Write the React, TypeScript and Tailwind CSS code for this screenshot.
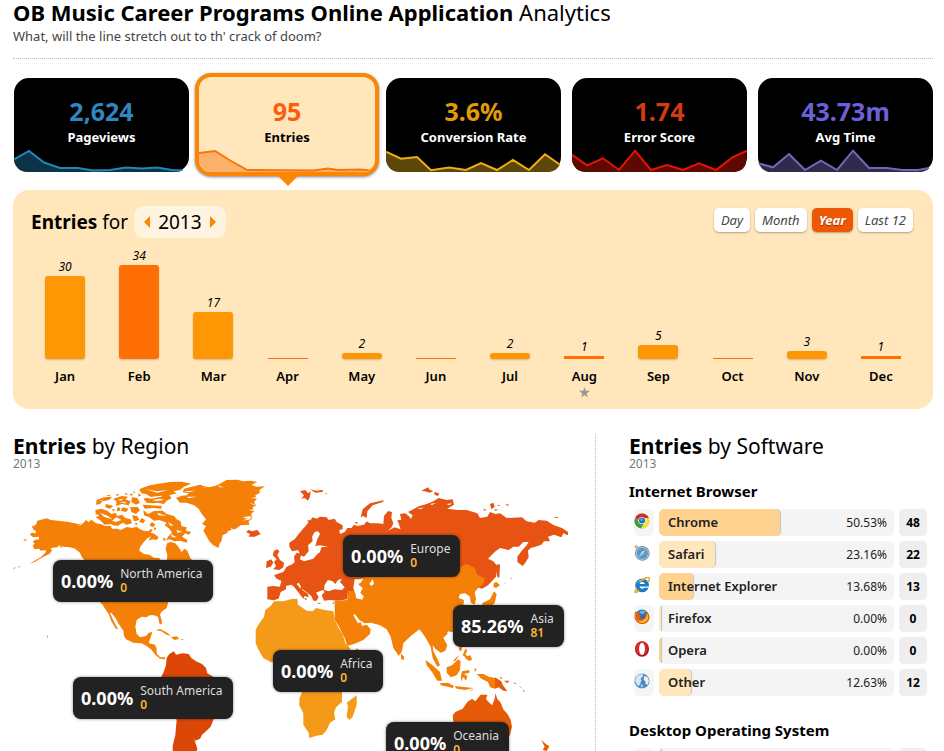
import React from "react";

type Stat = {
  value: string;
  label: string;
  color: string;
  line: string;
  fill: string;
  points: string;
  active?: boolean;
};

const stats: Stat[] = [
  { value: "2,624", label: "Pageviews", color: "text-[#2f86c1]", line: "#1f87bb", fill: "#0b3345", points: "0,11.5 15,3 30,14.5 46,20 64,20 79,22.5 96,22 112,19.5 128,20.5 143,19.5 158,22 169,22.5" },
  { value: "95", label: "Entries", color: "text-[#fb5d0a]", line: "#fb7407", fill: "#fdb06c", points: "0,5 16,3 31,12.5 48,22 114,22.5 128,20.5 138,22 160,21.5 171,22.5", active: true },
  { value: "3.6%", label: "Conversion Rate", color: "text-[#e39b0a]", line: "#eeae12", fill: "#5d4609", points: "0,3.7 15,10.7 31,9 45,22.3 63,19.5 80,22 95,15 111,22 127,12 143,22 159,6.3 175,17.5" },
  { value: "1.74", label: "Error Score", color: "text-[#d63a14]", line: "#e81305", fill: "#5c0803", points: "0,6.7 15,17.3 31,10.3 47,22 63,2.7 79,22 95,17 111,22 127,15.3 144,22 160,9.7 175,2.7" },
  { value: "43.73m", label: "Avg Time", color: "text-[#6c60dc]", line: "#6f69b8", fill: "#2e2b4b", points: "0,15.3 15,19.3 31,6 47,22 63,12.7 79,22 95,2.7 111,20 129,20 144,22 160,22 171,20" },
];

const months = [
  { name: "Jan", value: 30, height: 83 },
  { name: "Feb", value: 34, height: 94 },
  { name: "Mar", value: 17, height: 47 },
  { name: "Apr", value: 0, height: 1 },
  { name: "May", value: 2, height: 6 },
  { name: "Jun", value: 0, height: 1 },
  { name: "Jul", value: 2, height: 6 },
  { name: "Aug", value: 1, height: 3, current: true },
  { name: "Sep", value: 5, height: 14 },
  { name: "Oct", value: 0, height: 1 },
  { name: "Nov", value: 3, height: 8 },
  { name: "Dec", value: 1, height: 3 },
];

const regions = [
  { name: "North America", pct: "0.00%", count: 0, x: 40, y: 82 },
  { name: "South America", pct: "0.00%", count: 0, x: 60, y: 199 },
  { name: "Europe", pct: "0.00%", count: 0, x: 330, y: 57 },
  { name: "Africa", pct: "0.00%", count: 0, x: 260, y: 172 },
  { name: "Asia", pct: "85.26%", count: 81, x: 440, y: 127 },
  { name: "Oceania", pct: "0.00%", count: 0, x: 373, y: 244 },
];

function StatCard({ stat }: { stat: Stat }) {
  const shell = stat.active
    ? "relative -mt-[5px] -mr-1 -mb-1 -ml-[5px] h-[103px] rounded-[16px] border-4 border-[#fb8504] bg-[#ffe6bb] text-black shadow-[0_1px_3px_rgba(0,0,0,0.5)]"
    : "relative h-[94px] rounded-[15px] bg-black text-white";
  return (
    <button type="button" className={shell}>
      <span className={"flex h-full flex-col items-center overflow-hidden rounded-[13px] " + (stat.active ? "pt-[22px]" : "pt-[21px]")}>
        <span className={"text-[25px] leading-[24px] font-bold " + stat.color}>{stat.value}</span>
        <span className="mt-[5px] text-[13px] leading-[18px] font-bold">{stat.label}</span>
        <svg className="mt-auto h-6 w-full" viewBox="0 0 175 24" preserveAspectRatio="none" aria-hidden="true">
          <polygon points={"0,24 " + stat.points + " 173,24"} fill={stat.fill} />
          <polyline points={stat.points} fill="none" stroke={stat.line} strokeWidth="2" />
        </svg>
      </span>
      {stat.active && (
        <svg className="absolute top-[98px] left-[78px] h-[11px] w-[22px]" viewBox="0 0 22 11" aria-hidden="true">
          <path d="M0 0H22L11 11Z" fill="#fb8504" />
        </svg>
      )}
    </button>
  );
}

function WorldMap() {
  return (
    <svg className="block w-full" viewBox="39 144 1746 819" role="img" aria-label="World map">
      <g fill="#f58008">
        <path d="M95 290L108 284 112 272 140 265 152 270 175 272 205 276 237 283 250 278 258 270 266 276 274 269 288 280 305 283 315 288 332 287 336 296 352 296 362 300 380 291 398 294 408 288 418 296 430 302 446 304 452 296 458 300 452 308 466 312 455 318 440 326 430 338 420 352 418 362 432 372 448 374 462 383 478 384 486 396 500 395 502 375 497 358 501 340 512 336 526 340 536 352 545 366 553 356 562 362 572 386 600 402 612 430 585 450 560 468 545 480 520 500 505 517 500 534 484 546 480 554 486 575 484 584 478 580 474 560 462 556 448 556 440 562 425 560 410 570 406 590 410 612 420 622 438 618 446 608 457 606 452 622 446 640 465 644 470 656 470 670 480 682 496 682 494 688 480 686 466 674 455 660 440 648 425 640 400 638 378 628 372 618 370 602 356 582 348 566 334 548 330 550 342 575 354 598 348 597 334 574 326 552 316 538 308 524 298 515 270 480 252 440 255 392 245 380 240 368 225 356 210 352 190 350 178 346 172 352 152 354 156 362 148 372 128 382 104 396 88 402 104 392 122 382 136 368 138 360 122 362 118 356 104 358 98 348 104 340 98 336 104 330 118 328 116 320 100 322 90 314 94 308 106 310 108 304 100 298Z" />
        <path d="M528 204L545 197 560 196 566 190 548 187 552 176 575 170 600 164 625 172 645 168 662 160 680 150 712 149 730 154 752 152 772 156 755 164 768 170 795 169 778 180 780 188 766 196 770 208 762 216 768 226 758 232 762 245 754 250 756 266 746 274 748 284 722 286 708 296 686 302 680 310 668 316 664 334 658 342 656 354 640 346 628 334 618 316 610 302 618 288 606 282 618 268 604 250 596 236 582 226 560 218 540 218Z" />
        <path d="M418 178L432 172 450 166 485 160 510 156 545 155 574 161 552 170 540 180 520 184 530 190 508 196 515 205 500 212 492 222 472 218 458 220 440 218 430 206 452 200 438 192 424 190ZM430 240L444 252 462 243 488 242 500 252 522 258 530 268 542 274 544 288 560 292 558 302 574 306 566 314 556 310 546 320 562 330 560 338 540 332 522 334 510 328 498 330 506 318 516 308 508 296 494 286 500 278 478 270 462 272 448 262 432 256ZM286 240L304 236 322 242 334 252 346 248 352 258 366 254 376 264 392 268 396 280 380 284 368 278 350 290 332 282 314 284 302 272 288 262ZM290 210L312 202 336 200 328 210 308 214 300 222 288 224ZM340 206L366 198 384 200 376 208 392 214 386 226 366 222 348 228 350 216ZM318 222L340 228 330 236 316 232ZM368 232L386 236 378 246 362 242ZM396 202L412 204 420 218 408 224 394 216ZM390 232L412 230 420 240 408 252 394 246ZM396 256L412 258 418 270 402 274ZM424 264L436 270 430 280 418 276ZM428 224L452 226 485 228 484 236 460 234 434 236ZM456 276L466 284 458 292 448 286ZM454 316L464 312 476 322 470 330 458 328 446 332ZM376 188L384 192 376 196ZM400 184L406 187 400 190ZM178 350L186 346 184 354ZM70 327L82 330 74 333ZM40 414L50 412 42 417ZM54 410L62 408 56 413ZM140 614L145 620 142 624ZM467 601L480 597 498 606 514 618 500 614 484 604ZM512 622L530 619 538 626 524 630ZM543 627L552 628 545 631ZM488 322L498 328 492 334ZM462 290L470 296 462 300ZM346 194L358 191 352 198ZM318 196L334 194 326 199ZM414 190L424 196 416 200ZM390 190L400 194 392 198ZM352 232L362 234 358 244 350 242ZM334 238L346 238 340 244ZM404 278L414 280 408 286Z" />
      </g>
      <path
        fill="#fff"
        d="M420 198L450 201 486 197 484 200 452 206ZM436 177L470 184 506 180 472 188ZM456 210L480 206 492 210 470 213ZM300 248L324 258 336 268 312 260ZM336 272L350 262 364 270 348 276ZM286 252L298 256 290 262ZM472 248L500 258 476 256ZM504 276L520 286 512 288ZM530 300L548 306 532 308ZM512 312L530 322 516 322ZM296 214L312 208 306 212ZM352 210L370 206 364 212ZM358 218L374 215 380 220ZM560 200L592 200 566 204ZM552 184L586 182 566 187ZM606 166L622 178 612 172ZM652 166L672 172 660 172ZM768 202L752 204 770 206ZM764 222L748 220 764 225ZM764 238L746 240 760 243ZM752 258L728 262 742 266 726 272 752 268ZM700 298L690 292 696 300ZM612 262L602 270 612 272ZM602 292L614 296 606 300ZM232 288L246 280 256 274 244 284ZM186 356L200 352 216 362 230 370 244 386 226 374 210 364ZM334 290L350 286 356 294 342 294ZM392 286L404 284 412 292 398 292Z"
      />
      <path fill="#dc4606" d="M500 684L508 672 522 664 528 674 548 670 566 672 574 684 588 694 606 702 618 714 622 730 640 740 675 760 680 790 665 830 640 870 632 890 618 904 606 914 600 926 586 932 582 924 588 944 592 955 588 975 518 975 518 948 526 915 530 870 500 820 478 780 484 740 490 728 498 706Z" />
      <g fill="#e65312">
        <path d="M802 470L820 468 840 470 844 452 830 446 822 436 838 430 850 426 860 410 878 402 884 396 882 380 890 368 904 372 900 388 912 394 940 386 950 374 960 366 964 352 984 350 960 346 946 348 952 328 960 312 954 304 944 306 936 320 938 334 924 346 926 364 912 380 902 376 894 360 876 364 868 350 868 338 884 328 896 312 908 298 920 284 926 276 920 272 932 270 938 262 950 266 960 260 980 262 986 270 1004 266 1010 276 1028 286 1028 298 1018 300 1020 312 1034 306 1042 294 1054 294 1062 284 1072 288 1092 284 1100 274 1110 280 1134 280 1150 282 1152 258 1164 243 1176 246 1174 264 1180 280 1176 290 1164 302 1184 292 1202 298 1192 270 1204 270 1200 252 1216 250 1230 262 1232 268 1238 256 1224 246 1240 238 1258 228 1280 222 1300 214 1316 204 1340 210 1358 208 1362 224 1342 236 1372 240 1400 240 1432 250 1440 264 1462 260 1470 246 1486 252 1500 250 1520 264 1566 262 1580 274 1604 278 1616 270 1640 272 1662 286 1686 294 1704 306 1704 316 1690 310 1684 322 1662 314 1644 320 1650 334 1632 334 1624 344 1606 350 1592 354 1584 362 1586 382 1576 398 1568 408 1552 396 1552 380 1564 364 1580 346 1586 336 1570 336 1556 350 1540 350 1526 360 1500 354 1484 366 1464 386 1480 394 1492 408 1488 440 1464 466 1446 476 1400 460 1370 450 1100 450 1080 450 1062 466 1066 482 1044 484 1042 508 1012 512 990 510 972 512 965 496 974 486 968 480 948 488 956 500 950 512 940 512 934 498 922 488 908 478 896 458 890 462 902 476 924 492 926 502 914 498 910 506 896 488 882 470 874 464 858 468 858 478 842 486 836 506 820 511 802 508Z" />
        <path d="M822 362L832 358 838 364 832 376 840 390 852 398 850 412 838 420 820 418 828 408 822 396 830 388 818 376ZM800 394L814 388 820 398 812 410 798 414ZM738 306L746 300 756 304 772 300 782 312 764 320 746 320 750 312ZM900 184L916 180 924 190 932 184 930 200 924 212 914 204 904 206 912 196ZM930 178L950 182 968 179 968 186 946 188ZM976 190L982 191 978 194ZM1082 262L1088 238 1110 220 1150 211 1150 215 1118 226 1102 244 1100 264 1090 258ZM1264 182L1284 172 1290 180 1300 182 1290 188 1274 184ZM1302 186L1318 190 1314 198 1304 194ZM1470 222L1480 218 1484 230 1474 238ZM1490 226L1500 224 1498 228ZM1516 224L1526 222 1524 228ZM1482 238L1496 239 1486 242ZM1660 262L1674 260 1672 265ZM1492 402L1500 404 1498 444 1492 440 1488 420ZM902 470L908 472 906 486 902 480ZM952 518L964 519 956 522ZM910 504L922 506 918 510ZM996 519L1004 517 1000 522ZM1450 236L1460 240 1452 242ZM1064 276L1074 276 1070 282ZM886 406L892 402 892 408Z" />
      </g>
      <path fill="#fff" d="M972 480L974 464 984 450 998 454 1006 462 1014 450 1026 446 1020 456 1034 472 1026 480 1004 478 986 484ZM1252 236L1272 232 1262 238ZM1290 222L1308 218 1296 225ZM1340 222L1356 220 1348 226Z" />
      <g fill="#f58008">
        <path d="M1004 512L1042 510 1044 484 1060 482 1070 484 1072 500 1086 510 1090 502 1080 486 1088 474 1076 464 1072 452 1086 444 1104 440 1370 440 1380 410 1400 402 1424 414 1432 434 1454 444 1450 462 1436 472 1424 486 1428 506 1424 524 1412 518 1410 500 1396 490 1380 492 1376 504 1392 510 1390 530 1400 560 1378 604 1352 606 1344 604 1330 624 1342 646 1336 662 1322 668 1306 656 1298 646 1300 664 1312 686 1320 706 1312 710 1298 684 1292 650 1276 622 1262 602 1258 598 1230 620 1210 640 1206 664 1196 678 1180 654 1172 620 1160 598 1140 586 1112 578 1094 580 1078 570 1064 552 1060 556 1074 580 1082 576 1086 588 1100 584 1112 598 1110 612 1090 630 1062 642 1042 648 1034 624 1020 596 1004 568 1004 540Z" />
        <path d="M1202 670L1212 680 1212 690 1204 688ZM1276 690L1296 704 1320 726 1326 752 1312 752 1296 726 1280 706ZM1320 760L1344 758 1362 768 1358 774 1334 768 1322 766ZM1364 768L1392 771 1420 774 1396 780 1370 776ZM1406 784L1420 776 1418 780ZM1340 712L1356 706 1374 688 1382 694 1380 720 1370 736 1352 742 1340 728ZM1386 724L1408 720 1408 728 1392 732 1402 738 1398 752 1388 740 1386 756 1382 742ZM1390 622L1402 620 1396 632 1388 630ZM1326 604L1336 602 1344 610 1334 620 1326 616ZM1378 652L1386 650 1384 664 1376 660ZM1396 656L1402 660 1396 674 1402 678 1412 676 1416 690 1406 692 1392 682 1400 684 1388 676ZM1358 694L1374 678 1378 676 1366 692ZM1424 714L1430 718 1424 726ZM1430 732L1450 732 1466 740 1485 744 1485 776 1470 772 1464 756 1444 746ZM1446 520L1470 508 1482 484 1490 492 1484 520 1470 530 1450 530ZM1482 458L1490 456 1500 466 1488 474 1480 470ZM1512 462L1520 454 1516 460ZM1530 448L1538 440 1534 448ZM1066 656L1078 658 1070 662Z" />
      </g>
      <path fill="#fff" d="M1064 448L1080 448 1090 446 1082 458 1070 464 1076 476 1088 476 1080 488 1092 500 1080 508 1068 504 1066 490 1060 474ZM1108 462L1118 448 1122 462 1114 468Z" />
      <path fill="#f49a18" d="M767 600L774 586 792 560 796 540 812 528 822 514 850 514 872 508 892 506 894 524 920 542 938 544 948 534 974 540 1000 544 1004 566 1014 592 1028 612 1036 640 1050 654 1060 680 1050 720 1030 760 1026 790 1026 816 1008 832 1002 848 1006 868 990 878 980 900 968 914 946 918 928 924 926 908 910 884 910 850 898 826 898 806 906 786 880 760 880 720 840 700 812 696 790 684 776 660 767 640ZM1070 796L1070 824 1058 860 1048 870 1040 860 1044 828 1040 818Z" />
      <path fill="#e55b08" d="M1485 742L1504 754 1508 764 1522 784 1510 782 1496 772 1485 776ZM1500 740L1508 744 1502 746ZM1512 752L1528 752 1522 760ZM1540 756L1550 762 1544 762ZM1558 768L1566 774 1560 772ZM1568 778L1576 786 1570 784ZM1358 856L1366 846 1388 836 1402 816 1416 806 1426 814 1442 794 1462 794 1458 808 1476 826 1484 808 1486 790 1492 806 1502 818 1510 838 1524 854 1532 870 1536 890 1530 914 1516 945 1490 975 1400 975 1364 920ZM1624 930L1640 944 1648 948 1640 963 1628 960 1634 950Z" />
    </svg>
  );
}

function RegionTag({ region }: { region: (typeof regions)[number] }) {
  return (
    <div
      className="absolute flex h-[42px] items-center gap-[7px] rounded-lg bg-[#222] pr-[10px] pl-2 whitespace-nowrap shadow-[0_0_3px_rgba(0,0,0,0.5)]"
      style={{ left: `${(region.x / 582) * 100}%`, top: `${(region.y / 273) * 100}%` }}
    >
      <strong className="text-[18px] leading-6 font-bold text-white">{region.pct}</strong>
      <span className="flex flex-col text-[12px] leading-[14px]">
        <span className="text-[#ddd]">{region.name}</span>
        <span className="font-semibold text-[#fdb53a]">{region.count}</span>
      </span>
    </div>
  );
}

function ChromeIcon() {
  return (
    <svg className="size-4" viewBox="0 0 16 16" aria-hidden="true">
      <circle cx="8" cy="8" r="7.5" fill="#e9c62b" />
      <path d="M1.4 4.4A7.5 7.5 0 0 1 14.8 5L8 5 6 9Z" fill="#c8302a" />
      <path d="M1.4 4.4A7.5 7.5 0 0 0 7 15.4L10 10 5.5 10Z" fill="#3c9a46" />
      <path d="M14.8 5A7.5 7.5 0 0 1 7 15.4L11 9 10 5Z" fill="#f7dc4a" />
      <circle cx="8" cy="7.6" r="3.7" fill="#f4f4f4" />
      <circle cx="8" cy="7.6" r="3" fill="#1f6cc0" />
      <circle cx="7.6" cy="6.8" r="1.2" fill="#62b4ec" />
    </svg>
  );
}

function SafariIcon() {
  return (
    <svg className="size-4" viewBox="0 0 16 16" aria-hidden="true">
      <circle cx="2.2" cy="1.8" r="1.2" fill="none" stroke="#8e9499" />
      <circle cx="8.3" cy="8.3" r="7.4" fill="#8b9197" />
      <circle cx="8.3" cy="8.3" r="6.4" fill="#c3cace" />
      <circle cx="8.3" cy="8.3" r="5.6" fill="#4d9bd4" />
      <path d="M12 4.5L9.3 9.3 7.3 7.3Z" fill="#e9eef2" />
      <path d="M4.6 12.1L7.3 7.3 9.3 9.3Z" fill="#b9c3ca" />
      <path d="M11.4 5.2L8.6 8.6" stroke="#d66b3b" strokeWidth=".8" />
    </svg>
  );
}

function ExplorerIcon() {
  return (
    <svg className="size-4" viewBox="0 0 16 16" aria-hidden="true">
      <path d="M15 9.600H5.600c.2 1.300 1.200 2.100 2.600 2.100 1 0 1.700-.4 2.100-1h4.200c-.8 2.700-3.200 4.500-6.300 4.500-3.900 0-6.900-2.600-6.900-6.700S4.300 1.800 8.200 1.800c4.200 0 7 3 6.800 7.800zM5.700 7h5C10.500 5.800 9.600 5.100 8.200 5.100S5.900 5.800 5.700 7z" fill="#1d7ac6" />
      <path d="M3 6.300C4.200 3.800 7 2.700 9.500 3.200" stroke="#77c4f0" fill="none" />
      <path d="M3 11C.6 14.500.2 16 1.900 15.400c1-.3 2.200-1.100 3.300-2M5.500 4.800C9.500 1.600 13.500-.4 15 .9c.8.8.2 2.800-.9 4.400" fill="none" stroke="#e9a62c" strokeWidth="1.500" />
    </svg>
  );
}

function FirefoxIcon() {
  return (
    <svg className="size-4" viewBox="0 0 16 16" aria-hidden="true">
      <circle cx="8" cy="7.600" r="7" fill="#2a6cb4" />
      <path d="M5 2.500C7 1 10 1 11.500 2.600L10 5 7 5Z" fill="#56b6de" />
      <path d="M1.300 2.200L3.300 3.600 5.500 3.200 4.800 5.200 7.500 6 6 7.400C5.500 8.600 6.500 10 8.300 9.800 11 9.600 12 7 10.800 4.600L12.300 5.300 12 2.200C16.500 5 16.600 11 12.700 13.700 8.500 16.500 2.700 14.800 1 10.300.2 7.600.6 5 1.300 2.200Z" fill="#df5f12" />
      <path d="M13.300 4.500C15.500 9 13 13 9.500 13.800 6.500 14.300 4.500 13 3.500 11.300 7 13.300 12.500 11 13.300 4.500Z" fill="#f8bd26" />
      <path d="M2 4.500C1.200 7.500 2 10 3.500 11.300" fill="none" stroke="#f08a18" />
    </svg>
  );
}

function OperaIcon() {
  return (
    <svg className="size-4" viewBox="0 0 16 16" aria-hidden="true">
      <ellipse cx="8" cy="8" rx="7" ry="7.800" fill="#a80d12" />
      <ellipse cx="7.600" cy="7.600" rx="6.200" ry="7" fill="#da2a2b" />
      <ellipse cx="8" cy="7.900" rx="2.900" ry="6.100" fill="#fff" />
    </svg>
  );
}

function GlobeIcon() {
  return (
    <svg className="size-4" viewBox="0 0 16 16" aria-hidden="true">
      <circle cx="8" cy="8" r="7.600" fill="#8ba4b8" />
      <circle cx="8" cy="8" r="7" fill="#4688c0" />
      <path d="M2.500 3.500C4.500 1 8 .6 9.300 1.800L8.600 4 6.500 5.300 7.500 7.500 6.500 10 5 13 3 12 1 8Z" fill="#d8e5ee" />
      <path d="M10.500 3L13.500 4 15 8 13.500 12 11.500 11 11.500 8.500 9.600 7 10 4.500Z" fill="#e8f0f5" />
      <path d="M7 11L9.500 12 8.500 14.500 6.500 14Z" fill="#a8c6dc" />
    </svg>
  );
}

type SoftwareRow = { name: string; pct: number; count: number; Icon: () => React.ReactElement; plain?: boolean };

const browsers: SoftwareRow[] = [
  { name: "Chrome", pct: 50.53, count: 48, Icon: ChromeIcon },
  { name: "Safari", pct: 23.16, count: 22, Icon: SafariIcon, plain: true },
  { name: "Internet Explorer", pct: 13.68, count: 13, Icon: ExplorerIcon, plain: true },
  { name: "Firefox", pct: 0, count: 0, Icon: FirefoxIcon },
  { name: "Opera", pct: 0, count: 0, Icon: OperaIcon, plain: true },
  { name: "Other", pct: 12.63, count: 12, Icon: GlobeIcon },
];

const systems: SoftwareRow[] = [{ name: "Windows", pct: 0, count: 0, Icon: GlobeIcon }];

function SoftwareTable({ title, rows }: { title: string; rows: SoftwareRow[] }) {
  return (
    <section className="mb-[19px]">
      <h3 className="mb-[3px] text-[15px] leading-5 font-bold">{title}</h3>
      <table className="w-full border-separate border-spacing-[5px]" aria-label={title}>
        <tbody>
          {rows.map(({ name, pct, count, Icon, plain }, i) => (
            <tr key={name} className="h-[27px]">
              <td className={"w-5 rounded-[5px] p-0 pb-1 " + (plain ? "bg-white" : "bg-[#f5f5f5]")}>
                <Icon />
              </td>
              <td className="relative overflow-hidden rounded-[5px] bg-[#f4f4f4] p-0">
                <span
                  className={
                    "absolute inset-y-0 left-0 shadow-[1px_0_1px_rgba(0,0,0,0.2)] " +
                    (pct > 0 ? "rounded-[5px] " : "") +
                    (i % 2 === 0 ? "bg-[#ffd28f]" : "bg-[#ffe6bb]")
                  }
                  style={{ width: `calc(${pct}% + 2px)` }}
                />
                <span className="relative flex items-center justify-between pr-[7px] pl-[9px] leading-[27px]">
                  <span className="text-[13px] font-semibold text-[#222]">{name}</span>
                  <span className="text-[12px] text-[#222]">{pct.toFixed(2)}%</span>
                </span>
              </td>
              <td className="w-7 rounded-[5px] bg-[#eee] p-0 text-center text-[12px] font-bold">{count}</td>
            </tr>
          ))}
        </tbody>
      </table>
    </section>
  );
}

export default function App() {
  const ranges = ["Day", "Month", "Year", "Last 12"];
  return (
    <div className="h-screen overflow-hidden bg-white pr-[11px] pl-[13px] font-['Noto_Sans',sans-serif] text-black">
      <header className="border-b border-dotted border-[#bbb] pb-[13px]">
        <h1 className="text-[22px] leading-6 whitespace-nowrap">
          <b>OB Music Career Programs Online Application</b> Analytics
        </h1>
        <p className="mt-[3px] text-[13px] leading-[18px] text-[#444]">What, will the line stretch out to th' crack of doom?</p>
      </header>

      <nav className="mt-[19px] grid grid-cols-5 gap-[11px] pl-px">
        {stats.map((s) => (
          <StatCard key={s.label} stat={s} />
        ))}
      </nav>

      <section className="mt-[18px] h-[219px] rounded-[16px] bg-[#ffe6bb] pt-4">
        <div className="flex items-center justify-between pr-5 pl-[18px]">
          <div className="flex items-center gap-[6px]">
            <h2 className="text-[19px] leading-8">
              <b>Entries</b> for
            </h2>
            <div className="flex h-8 items-center gap-2 rounded-[10px] bg-[#fff4df] px-[10px] text-[19px]">
              <button type="button" aria-label="Previous year">
                <svg className="h-3 w-[6px]" viewBox="0 0 6 12" aria-hidden="true">
                  <path d="M6 0V12L0 6Z" fill="#fb8504" />
                </svg>
              </button>
              2013
              <button type="button" aria-label="Next year">
                <svg className="h-3 w-[6px]" viewBox="0 0 6 12" aria-hidden="true">
                  <path d="M0 0V12L6 6Z" fill="#fb8504" />
                </svg>
              </button>
            </div>
          </div>
          <div className="-mt-1 flex gap-[5px]">
            {ranges.map((r) => (
              <button
                key={r}
                type="button"
                className={
                  "h-6 rounded-[5px] px-[7px] text-[13px] leading-6 italic shadow-[0_1px_2px_rgba(0,0,0,0.3)] " +
                  (r === "Year" ? "bg-[#ee5804] font-bold text-white [text-shadow:0_1px_1px_rgba(0,0,0,0.4)]" : "bg-white text-[#444]")
                }
              >
                {r}
              </button>
            ))}
          </div>
        </div>
        <div className="grid grid-cols-12 px-[15px]">
          {months.map((m, i) => (
            <div key={m.name} className="flex flex-col items-center">
              <div className="flex h-[121px] flex-col items-center justify-end">
                {m.value > 0 && <span className="text-[12px] leading-[18px] italic">{m.value}</span>}
                <div
                  className={
                    "w-10 " +
                    (m.height > 5 ? "rounded-[3px] shadow-[0_1px_2px_rgba(0,0,0,0.2)] " : "") +
                    (i % 2 === 0 ? "bg-[#ff9705]" : "bg-[#ff6f06]")
                  }
                  style={{ height: m.height }}
                />
              </div>
              <span className="mt-2 text-[13px] leading-[18px] font-semibold">{m.name}</span>
              {m.current && (
                <svg className="mt-0.5 size-[11px]" viewBox="0 0 12 12" aria-hidden="true">
                  <path d="M6 0L7.400 4.200H12L8.300 7 9.700 11.400 6 8.700 2.300 11.400 3.700 7 0 4.200H4.600Z" fill="#999" />
                </svg>
              )}
            </div>
          ))}
        </div>
      </section>

      <div className="mt-[25px] flex">
        <section className="flex-1 border-r border-dotted border-[#bbb]">
          <h2 className="text-[21px] leading-6">
            <b>Entries</b> by Region
          </h2>
          <p className="text-[12px] leading-3 text-[#777]">2013</p>
          <div className="relative mt-2">
            <WorldMap />
            {regions.map((r) => (
              <RegionTag key={r.name} region={r} />
            ))}
          </div>
        </section>
        <section className="ml-[33px] w-[304px] pr-px">
          <h2 className="text-[21px] leading-6">
            <b>Entries</b> by Software
          </h2>
          <p className="mb-[11px] text-[12px] leading-3 text-[#777]">2013</p>
          <SoftwareTable title="Internet Browser" rows={browsers} />
          <SoftwareTable title="Desktop Operating System" rows={systems} />
        </section>
      </div>
    </div>
  );
}
